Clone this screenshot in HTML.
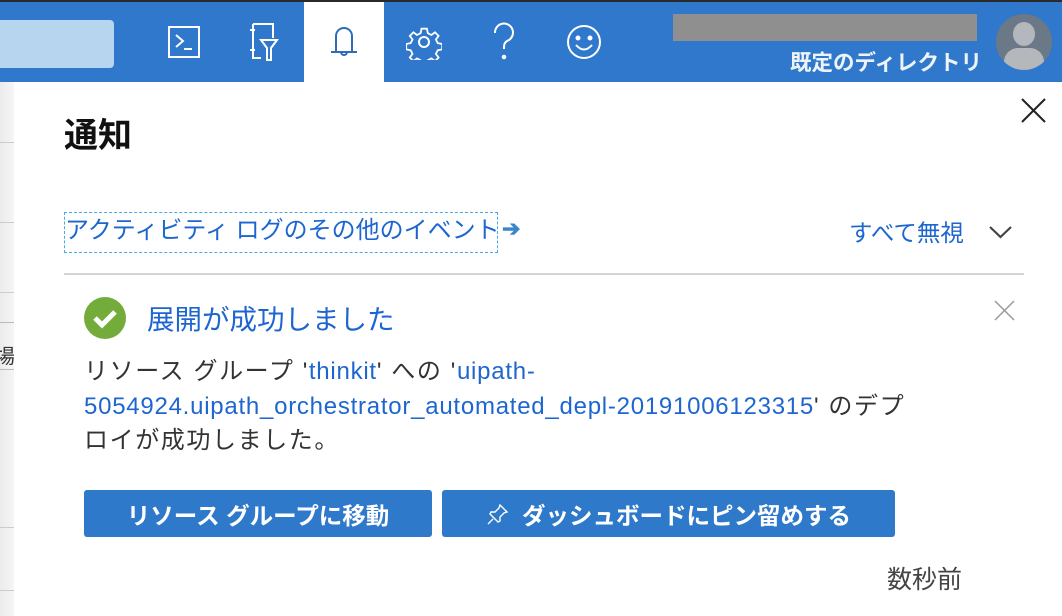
<!DOCTYPE html>
<html><head><meta charset="utf-8"><style>
*{margin:0;padding:0;box-sizing:border-box}
body{width:1062px;height:616px;overflow:hidden;background:#fff;font-family:"Liberation Sans","Noto Sans CJK JP",sans-serif;position:relative}
.a{position:absolute}
.hdr{left:0;top:0;width:1062px;height:82px;background:#2f78cb;border-top:2px solid #2a2a2a}
.ic{top:2px;width:80px;height:80px;display:flex;align-items:center;justify-content:center}
.btn{background:#2f79cb;color:#fff;font-weight:bold;font-size:23.5px;border-radius:3px;display:flex;align-items:center;justify-content:center;white-space:nowrap}
.blue{color:#1e66cf}
.lt{letter-spacing:0.75px}
</style></head><body>
<div class="a hdr"></div>
<div class="a" style="left:0;top:20px;width:114px;height:48px;background:#b7d5ee;border-radius:0 4px 4px 0"></div>
<div class="a ic" style="left:144px"><svg width="34" height="34" viewBox="0 0 34 34" fill="none" stroke="#fff" stroke-width="2"><rect x="2" y="2" width="30" height="30"/><path d="M9 10l7 6-7 6M17 24h8"/></svg></div>
<div class="a ic" style="left:224px"><svg width="34" height="40" viewBox="0 0 34 40" fill="none" stroke="#fff" stroke-width="2"><path d="M6 2h20v14M6 2v34h8M3 8h5M3 28h5"/><path d="M14 18h16l-6 8v12h-4V26z"/></svg></div>
<div class="a" style="left:304px;top:2px;width:80px;height:80px;background:#fff"></div>
<div class="a ic" style="left:304px"><svg width="30" height="36" viewBox="0 0 30 36" fill="none" stroke="#2f6bb8" stroke-width="2"><path d="M7 28V12a8 8 0 0 1 16 0v16M2 28h26M12 28a3 3 0 0 0 6 0"/></svg></div>
<div class="a ic" style="left:384px"><svg width="36" height="36" viewBox="0 0 36 36" fill="none" stroke="#fff" stroke-width="2"><path d="M15 3h6l1 5 4 2 4-3 4 4-3 4 2 4 5 1v6l-5 1-2 4 3 4-4 4-4-3-4 2-1 5h-6l-1-5-4-2-4 3-4-4 3-4-2-4-5-1v-6l5-1 2-4-3-4 4-4 4 3 4-2z" transform="translate(2 2) scale(.9)"/><circle cx="18" cy="18" r="5"/></svg></div>
<div class="a ic" style="left:464px"><svg width="30" height="40" viewBox="0 0 30 40" fill="none" stroke="#fff" stroke-width="2"><path d="M6 11a9 9 0 1 1 12 8c-3 2-3 4-3 8"/><circle cx="15" cy="35" r="1.3" fill="#fff"/></svg></div>
<div class="a ic" style="left:544px"><svg width="36" height="36" viewBox="0 0 36 36" fill="none" stroke="#fff" stroke-width="2"><circle cx="18" cy="18" r="16"/><circle cx="12" cy="14" r="1.5" fill="#fff"/><circle cx="24" cy="14" r="1.5" fill="#fff"/><path d="M10 21q8 9 16 0"/></svg></div>
<div class="a" style="left:673px;top:14px;width:304px;height:27px;background:#8f8f8f"></div>
<div class="a" style="left:700px;top:46px;width:282px;text-align:right;color:#eef3fa;font-weight:bold;font-size:21.5px;white-space:nowrap">既定のディレクトリ</div>
<div class="a" style="left:996px;top:14px;width:56px;height:56px;border-radius:50%;background:#6b7888;overflow:hidden"><div class="a" style="left:17px;top:8px;width:22px;height:24px;border-radius:50%;background:#b4b7bb"></div><div class="a" style="left:8px;top:34px;width:40px;height:30px;border-radius:14px 14px 0 0;background:#b4b7bb"></div></div>
<div class="a" style="left:0;top:82px;width:14px;height:534px;background:linear-gradient(90deg,#ebebeb,#f6f6f6)"></div>
<div class="a" style="left:0;top:142px;width:14px;height:1px;background:#ccc"></div>
<div class="a" style="left:0;top:222px;width:14px;height:1px;background:#ccc"></div>
<div class="a" style="left:0;top:292px;width:14px;height:1px;background:#ccc"></div>
<div class="a" style="left:0;top:322px;width:14px;height:1px;background:#bbb"></div>
<div class="a" style="left:0;top:369px;width:14px;height:1px;background:#bbb"></div>
<div class="a" style="left:0;top:527px;width:14px;height:1px;background:#ccc"></div>
<div class="a" style="left:0;top:590px;width:14px;height:1px;background:#ccc"></div>
<div class="a" style="left:0;top:340px;width:14px;overflow:hidden;font-size:20px;color:#333;white-space:nowrap"><span style="margin-left:-5px">場</span></div>
<div class="a" style="left:64px;top:108px;font-size:34px;font-weight:bold;color:#111;white-space:nowrap">通知</div>
<svg class="a" style="left:1021px;top:98px" width="25" height="25" viewBox="0 0 25 25" stroke="#222" stroke-width="2"><path d="M1 1l23 23M24 1L1 24"/></svg>
<div class="a blue" style="left:64px;top:212px;width:434px;height:41px;border:1.5px dashed #4aa8e8;font-size:24px;line-height:36px;white-space:nowrap;overflow:hidden">アクティビティ ログのその他のイベント</div>
<div class="a" style="left:502px;top:216px;font-size:22px;color:#3a86c8;font-weight:bold">➔</div>
<div class="a blue" style="left:849px;top:214px;font-size:23.5px;white-space:nowrap">すべて無視</div>
<svg class="a" style="left:988px;top:224px" width="25" height="16" viewBox="0 0 25 16" fill="none" stroke="#444" stroke-width="2.2"><path d="M2 3l10.5 10L23 3"/></svg>
<div class="a" style="left:64px;top:273px;width:960px;height:2px;background:#d4d4d4"></div>
<svg class="a" style="left:84px;top:297px" width="42" height="42" viewBox="0 0 42 42"><circle cx="21" cy="21" r="21" fill="#74ac3b"/><path d="M11 21l7 7 13-13" fill="none" stroke="#fff" stroke-width="5"/></svg>
<div class="a blue" style="left:147px;top:297px;font-size:27.5px;white-space:nowrap">展開が成功しました</div>
<svg class="a" style="left:994px;top:300px" width="21" height="21" viewBox="0 0 21 21" stroke="#999" stroke-width="1.5"><path d="M1 1l19 19M20 1L1 20"/></svg>
<div class="a" style="left:84px;top:355px;width:960px;font-size:24px;line-height:34.5px;color:#333;white-space:nowrap;letter-spacing:1.6px">リソース グループ '<span class="blue lt">thinkit</span>' への '<span class="blue lt">uipath-<br>5054924.uipath_orchestrator_automated_depl-20191006123315</span>' のデプ<br>ロイが成功しました。</div>
<div class="a btn" style="left:84px;top:490px;width:348px;height:47px">リソース グループに移動</div>
<div class="a btn" style="left:442px;top:490px;width:453px;height:47px"><svg width="24" height="24" viewBox="0 0 24 24" fill="none" stroke="#fff" stroke-width="1.4" style="margin-right:12px"><path d="M14 3l7 7-3 1-4 4 0 4-2 1-8-8 1-2 4 0 4-4z M7 17l-5 5"/></svg>ダッシュボードにピン留めする</div>
<div class="a" style="left:887px;top:560px;font-size:25px;color:#444;white-space:nowrap">数秒前</div>
</body></html>
